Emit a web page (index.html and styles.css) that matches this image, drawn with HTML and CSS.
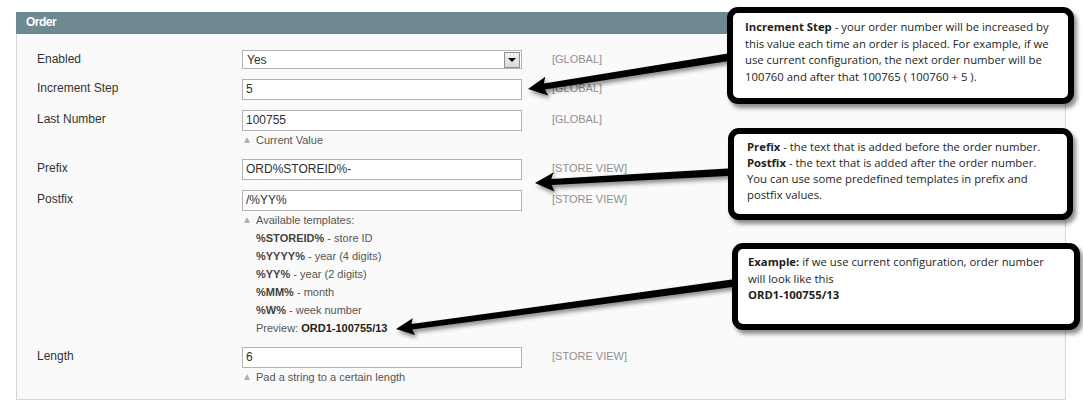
FILE: index.html
```html
<!DOCTYPE html>
<html>
<head>
<meta charset="utf-8">
<title>Order</title>
<link rel="stylesheet" href="styles.css">
</head>
<body>
<div class="page">
  <div class="fieldset">
    <div class="legend">Order</div>
    <div class="content">
      <div class="row">
        <div class="label">Enabled</div>
        <div class="value">
          <div class="select"><span class="select-text">Yes</span><span class="select-btn"><span class="caret"></span></span></div>
        </div>
        <div class="scope">[GLOBAL]</div>
      </div>
      <div class="row">
        <div class="label">Increment Step</div>
        <div class="value"><div class="input">5</div></div>
        <div class="scope">[GLOBAL]</div>
      </div>
      <div class="row">
        <div class="label">Last Number</div>
        <div class="value">
          <div class="input">100755</div>
          <div class="note"><span class="tri"></span>Current Value</div>
        </div>
        <div class="scope">[GLOBAL]</div>
      </div>
      <div class="row">
        <div class="label">Prefix</div>
        <div class="value"><div class="input">ORD%STOREID%-</div></div>
        <div class="scope">[STORE VIEW]</div>
      </div>
      <div class="row">
        <div class="label">Postfix</div>
        <div class="value">
          <div class="input">/%YY%</div>
          <div class="note"><span class="tri"></span>Available templates:</div>
          <div class="note"><b>%STOREID%</b> - store ID</div>
          <div class="note"><b>%YYYY%</b> - year (4 digits)</div>
          <div class="note"><b>%YY%</b> - year (2 digits)</div>
          <div class="note"><b>%MM%</b> - month</div>
          <div class="note"><b>%W%</b> - week number</div>
          <div class="note">Preview: <b class="dark">ORD1-100755/13</b></div>
        </div>
        <div class="scope">[STORE VIEW]</div>
      </div>
      <div class="row">
        <div class="label">Length</div>
        <div class="value">
          <div class="input">6</div>
          <div class="note"><span class="tri"></span>Pad a string to a certain length</div>
        </div>
        <div class="scope">[STORE VIEW]</div>
      </div>
    </div>
  </div>

  <svg class="arrows" width="1083" height="408" viewBox="0 0 1083 408">
    <g fill="#000">
      <g transform="translate(528 89) rotate(-9)">
        <path d="M0 0 L19 -9.5 L16.5 -3 L206 -3.8 L206 3.8 L16.5 3 L19 9.5 Z"/>
      </g>
      <g transform="translate(535 183) rotate(-3.2)">
        <path d="M0 0 L19 -9.5 L16.5 -3 L197 -3.8 L197 3.8 L16.5 3 L19 9.5 Z"/>
      </g>
      <g transform="translate(396 329) rotate(-7.75)">
        <path d="M0 0 L18 -8.5 L16 -2.8 L343 -3.8 L343 3.8 L16 2.8 L18 8.5 Z"/>
      </g>
    </g>
  </svg>

  <div class="callout callout-1">
    <b>Increment Step</b> - your order number will be increased by<br>
    this value each time an order is placed. For example, if we<br>
    use current configuration, the next order number will be<br>
    100760 and after that 100765 ( 100760 + 5 ).
  </div>
  <div class="callout callout-2">
    <b>Prefix</b> - the text that is added before the order number.<br>
    <b>Postfix</b> - the text that is added after the order number.<br>
    You can use some predefined templates in prefix and<br>
    postfix values.
  </div>
  <div class="callout callout-3">
    <b>Example:</b> if we use current configuration, order number<br>
    will look like this<br>
    <b>ORD1-100755/13</b>
  </div>
</div>
</body>
</html>
```

FILE: styles.css
```css
html, body {
  margin: 0;
  padding: 0;
  background: #fff;
}

.page {
  position: relative;
  width: 1083px;
  height: 408px;
  overflow: hidden;
  padding-top: 12px;
  box-sizing: border-box;
  font-family: "Liberation Sans", Arial, sans-serif;
  color: #2f2f2f;
}

.fieldset {
  margin-left: 16px;
  width: 1050px;
}

.legend {
  height: 22px;
  line-height: 21px;
  background: #6f8992;
  color: #fff;
  font-weight: bold;
  font-size: 12px;
  letter-spacing: -0.5px;
  padding-left: 10px;
}

.content {
  background: #fafafa;
  border: 1px solid #d6d6d6;
  border-top: none;
  padding: 16px 0 13px 20px;
}

.row {
  display: grid;
  grid-template-columns: 205px 280px 1fr;
  align-items: start;
}

.row + .row {
  margin-top: 10px;
}

.label {
  font-size: 12px;
  line-height: 19px;
  color: #333;
}

.scope {
  padding-left: 30px;
  font-size: 11px;
  line-height: 19px;
  color: #8f8f8f;
}

.input {
  box-sizing: border-box;
  height: 21px;
  border: 1px solid #b2b2b2;
  background: #fff;
  font-size: 12px;
  line-height: 19px;
  padding-left: 3px;
  color: #2f2f2f;
}

.select {
  box-sizing: border-box;
  height: 19px;
  border: 1px solid #b2b2b2;
  background: #fff;
  display: flex;
  align-items: center;
  justify-content: space-between;
  font-size: 12px;
  padding-left: 4px;
  padding-right: 1px;
}

.select-btn {
  box-sizing: border-box;
  width: 16px;
  height: 16px;
  border: 1px solid #8f8f8f;
  background: linear-gradient(#f2f2f2, #d9d9d9);
  display: flex;
  align-items: center;
  justify-content: center;
}

.caret {
  width: 0;
  height: 0;
  border-left: 4px solid transparent;
  border-right: 4px solid transparent;
  border-top: 4px solid #000;
  margin-top: 1px;
}

.note {
  font-size: 11px;
  line-height: 18px;
  color: #555;
  padding-left: 14px;
  position: relative;
}

.note b {
  color: #444;
}

.note b.dark {
  color: #222;
}

.tri {
  position: absolute;
  left: 2px;
  top: 6px;
  width: 0;
  height: 0;
  border-left: 3.5px solid transparent;
  border-right: 3.5px solid transparent;
  border-bottom: 6px solid #b0b0b0;
}

.arrows {
  position: absolute;
  left: 0;
  top: 0;
  filter: drop-shadow(2px 3px 2px rgba(0, 0, 0, 0.45));
}

.callout {
  position: absolute;
  box-sizing: border-box;
  background: #fff;
  border: 6px solid #000;
  border-radius: 11px;
  box-shadow: 3px 4px 4px rgba(0, 0, 0, 0.45);
  font-family: "Open Sans", "Noto Sans", sans-serif;
  font-size: 11.3px;
  color: #1e1e1e;
}

.callout b {
  font-weight: bold;
}

.callout-1 {
  left: 727px;
  top: 7px;
  width: 347px;
  height: 97px;
  padding: 6px 0 0 12px;
  line-height: 16.6px;
}

.callout-2 {
  left: 728px;
  top: 128px;
  width: 345px;
  height: 92px;
  padding: 5px 0 0 13px;
  line-height: 16px;
}

.callout-3 {
  left: 732px;
  top: 243px;
  width: 348px;
  height: 87px;
  padding: 5px 0 0 10px;
  line-height: 16.6px;
}
```
